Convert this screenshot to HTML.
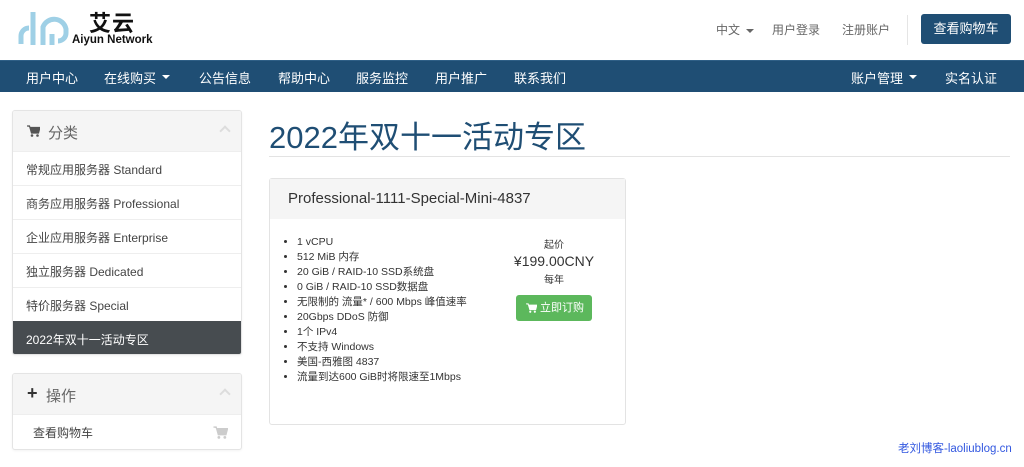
<!DOCTYPE html>
<html><head><meta charset="utf-8"><style>
*{box-sizing:border-box;margin:0;padding:0}
body{width:1024px;height:467px;overflow:hidden;background:#fff;font-family:"Liberation Sans","Noto Sans CJK SC",sans-serif;color:#333;position:relative}
.abs{position:absolute}
.nav{top:60px;left:0;width:1024px;height:32px;background:#1f4e74;border-top:1px solid #2f5f86}
.nav span{position:absolute;top:7px;color:#fff;font-size:13px}
.caret{display:inline-block;border-left:4px solid transparent;border-right:4px solid transparent;border-top:4px solid currentColor;vertical-align:middle;margin-left:6px}
.panel{border:1px solid #e4e4e4;border-radius:3px;background:#fff;box-shadow:0 1px 2px rgba(0,0,0,.05)}
.ph{background:#f5f5f5;height:40px;position:relative;font-size:15px;color:#666}
.item{height:34px;border-top:1px solid #eee;font-size:12px;padding:9px 13px;color:#444;position:relative}
.chev{position:absolute;right:12px;top:16px;width:8px;height:8px;border-left:2px solid #ddd;border-top:2px solid #ddd;transform:rotate(45deg)}
ul{list-style:disc;padding-left:27px;font-size:10.5px;line-height:15px;color:#333}
</style></head><body>
<svg class="abs" style="left:16px;top:8px" width="54" height="40" viewBox="0 0 54 40"><g fill="none" stroke="#9fd0e6" stroke-width="5"><path d="M5 36V28a8 8 0 0 1 8-8"/><path d="M17 37V4"/><path d="M27 37V19a12 12 0 0 1 23 2v4a8 8 0 0 1-8 8"/><path d="M36 37V26"/></g></svg>
<div class="abs" style="left:89px;top:6px;font-size:22px;font-weight:bold;color:#111;letter-spacing:1px">艾云</div>
<div class="abs" style="left:72px;top:34px;font-size:11.5px;font-weight:bold;color:#111">Aiyun Network</div>
<div class="abs" style="left:716px;top:21px;font-size:12px;color:#666">中文<span class="caret"></span></div>
<div class="abs" style="left:772px;top:21px;font-size:12px;color:#666">用户登录</div>
<div class="abs" style="left:842px;top:21px;font-size:12px;color:#666">注册账户</div>
<div class="abs" style="left:907px;top:15px;width:1px;height:30px;background:#e5e5e5"></div>
<div class="abs" style="left:921px;top:14px;width:90px;height:30px;background:#1f4e74;border-radius:3px;color:#fff;font-size:13px;text-align:center;line-height:30px">查看购物车</div>
<div class="abs nav">
<span style="left:26px">用户中心</span><span style="left:104px">在线购买<span class="caret"></span></span><span style="left:199px">公告信息</span><span style="left:278px">帮助中心</span><span style="left:356px">服务监控</span><span style="left:435px">用户推广</span><span style="left:514px">联系我们</span><span style="left:851px">账户管理<span class="caret"></span></span><span style="left:945px">实名认证</span>
</div>
<div class="abs panel" style="left:12px;top:110px;width:230px;height:245px;overflow:hidden">
<div class="ph"><svg style="position:absolute;left:14px;top:14px" width="13" height="12" viewBox="0 0 13 12"><path d="M0 1h2.5l2 7h7l1.5-5.5H3.5" fill="#555" stroke="#555" stroke-width="1.2"/><circle cx="5" cy="10.5" r="1.3" fill="#555"/><circle cx="10.5" cy="10.5" r="1.3" fill="#555"/></svg><span style="position:absolute;left:35px;top:11px">分类</span><div class="chev"></div></div>
<div class="item">常规应用服务器 Standard</div><div class="item">商务应用服务器 Professional</div><div class="item">企业应用服务器 Enterprise</div><div class="item">独立服务器 Dedicated</div><div class="item">特价服务器 Special</div>
<div class="item" style="background:#474c50;color:#fff;border-color:#474c50">2022年双十一活动专区</div>
</div>
<div class="abs panel" style="left:12px;top:373px;width:230px;height:77px;overflow:hidden">
<div class="ph"><b style="position:absolute;left:14px;top:9px;font-size:18px;color:#333">+</b><span style="position:absolute;left:33px;top:11px">操作</span><div class="chev"></div></div>
<div class="item" style="padding-left:20px">查看购物车<svg style="position:absolute;right:13px;top:11px" width="15" height="13" viewBox="0 0 13 12"><path d="M0 1h2.5l2 7h7l1.5-5.5H3.5" fill="#ccc" stroke="#ccc" stroke-width="1.2"/><circle cx="5" cy="10.5" r="1.3" fill="#ccc"/><circle cx="10.5" cy="10.5" r="1.3" fill="#ccc"/></svg></div>
</div>
<div class="abs" style="left:269px;top:112px;font-size:31px;color:#1f4e74">2022年双十一活动专区</div>
<div class="abs" style="left:269px;top:156px;width:741px;height:1px;background:#e3e3e3"></div>
<div class="abs" style="left:269px;top:178px;width:357px;height:247px;border:1px solid #e3e3e3;border-radius:3px">
<div style="background:#f5f5f5;height:40px;padding:11px 18px;font-size:15px;color:#333">Professional-1111-Special-Mini-4837</div>
<ul style="position:absolute;left:0;top:56px">
<li>1 vCPU</li><li>512 MiB 内存</li><li>20 GiB / RAID-10 SSD系统盘</li><li>0 GiB / RAID-10 SSD数据盘</li><li>无限制的 流量* / 600 Mbps 峰值速率</li><li>20Gbps DDoS 防御</li><li>1个 IPv4</li><li>不支持 Windows</li><li>美国-西雅图 4837</li><li>流量到达600 GiB时将限速至1Mbps</li></ul>
<div style="position:absolute;left:214px;top:57px;width:140px;text-align:center;font-size:10px">起价<div style="font-size:14px;margin:2px 0">¥199.00CNY</div>每年</div>
<div style="position:absolute;left:246px;top:116px;width:76px;height:26px;background:#5cb85c;border-radius:3px;color:#fff;font-size:11px;line-height:26px"><svg style="position:absolute;left:10px;top:8px" width="11" height="10" viewBox="0 0 13 12"><path d="M0 1h2.5l2 7h7l1.5-5.5H3.5" fill="#fff" stroke="#fff" stroke-width="1.2"/><circle cx="5" cy="10.5" r="1.3" fill="#fff"/><circle cx="10.5" cy="10.5" r="1.3" fill="#fff"/></svg><span style="position:absolute;left:24px">立即订购</span></div>
</div>
<div class="abs" style="left:898px;top:440px;font-size:11.5px;color:#3358e0">老刘博客-laoliublog.cn</div>
</body></html>
